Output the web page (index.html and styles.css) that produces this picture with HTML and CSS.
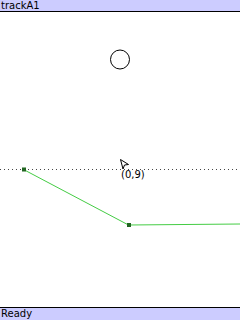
FILE: index.html
```html
<!DOCTYPE html>
<html lang="en">
<head>
    <meta charset="UTF-8">
    <meta name="viewport" content="width=device-width, initial-scale=1.0">
    <title>trackA1</title>
    <link rel="stylesheet" href="styles.css">
</head>
<body>
    <div class="screen">
        <!-- Title bar -->
        <div class="bar title-bar">trackA1</div>

        <!-- Track canvas -->
        <div class="canvas">
            <svg class="plot" viewBox="0 12 240 295" width="240" height="295">
                <line x1="0" y1="169.5" x2="240" y2="169.5" stroke="#444" stroke-width="1" stroke-dasharray="1 3"/>
                <circle cx="120" cy="59.5" r="9.5" fill="none" stroke="#000" stroke-width="1"/>
                <polyline points="23.5,169.5 128.5,225 240,224" fill="none" stroke="#44cc44" stroke-width="1"/>
                <rect x="22" y="167.5" width="4" height="4" fill="#226622"/>
                <rect x="127" y="223" width="4" height="4" fill="#226622"/>
                <path d="M120.5 159.5 L128.5 164.5 L124.5 165 L123 169 Z" fill="#fff" stroke="#000" stroke-width="1"/>
                <text x="121" y="177.5" class="coord">(0,9)</text>
            </svg>
        </div>

        <!-- Status bar -->
        <div class="bar status-bar">Ready</div>
    </div>
</body>
</html>
```

FILE: styles.css
```css
body {
    margin: 0;
    padding: 0;
    background-color: #fff;
    font-family: "DejaVu Sans", sans-serif;
}
.screen {
    width: 240px;
    height: 320px;
    display: flex;
    flex-direction: column;
    overflow: hidden;
}
.bar {
    background-color: #ccccff;
    color: #000;
    font-size: 10px;
    line-height: 11px;
    height: 11px;
    padding-left: 1px;
}
.title-bar {
    border-bottom: 1px solid #000;
}
.status-bar {
    border-top: 1px solid #000;
    height: 12px;
}
.canvas {
    flex: 1;
    position: relative;
}
.plot {
    display: block;
}
.coord {
    font-family: "DejaVu Sans", sans-serif;
    font-size: 10px;
    fill: #000;
}
```
